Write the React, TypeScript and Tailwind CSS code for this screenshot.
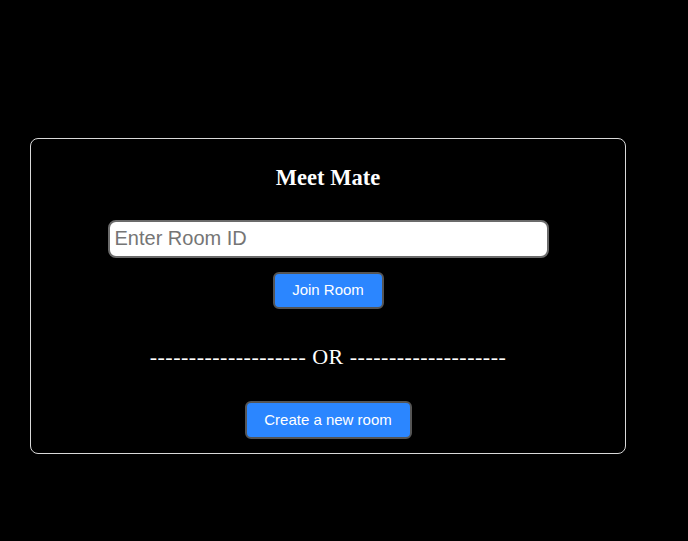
export default function App() {
  return (
    <main className="min-h-[541px] w-full bg-black flex flex-col pt-[138px] pl-[30px]">
      {/* Card */}
      <div className="w-[596px] h-[316px] border border-[#d9d9d9] rounded-[8px] flex flex-col items-center">
        <h1 className="mt-[22px] text-[22.5px] font-bold text-white font-['Liberation_Serif',serif]">Meet Mate</h1>

        <input
          type="text"
          placeholder="Enter Room ID"
          className="mt-[25px] w-[441px] h-[38px] bg-white border-2 border-[#6b6b6b] rounded-[8px] px-[5px] text-[20px] text-black placeholder:text-[#757575] font-['Liberation_Sans',sans-serif] outline-none"
        />

        <button className="mt-[14px] w-[111px] h-[37px] bg-[#2b86ff] text-white text-[15px] rounded-[6px] border-2 border-[#555] font-['Liberation_Sans',sans-serif]">
          Join Room
        </button>

        <p className="mt-[37px] text-[22px] tracking-[0.5px] text-white font-['Liberation_Serif',serif] leading-none">
          -------------------- OR --------------------
        </p>

        <button className="mt-[33px] w-[167px] h-[38px] bg-[#2b86ff] text-white text-[15px] rounded-[6px] border-2 border-[#555] font-['Liberation_Sans',sans-serif]">
          Create a new room
        </button>
      </div>
    </main>
  )
}
